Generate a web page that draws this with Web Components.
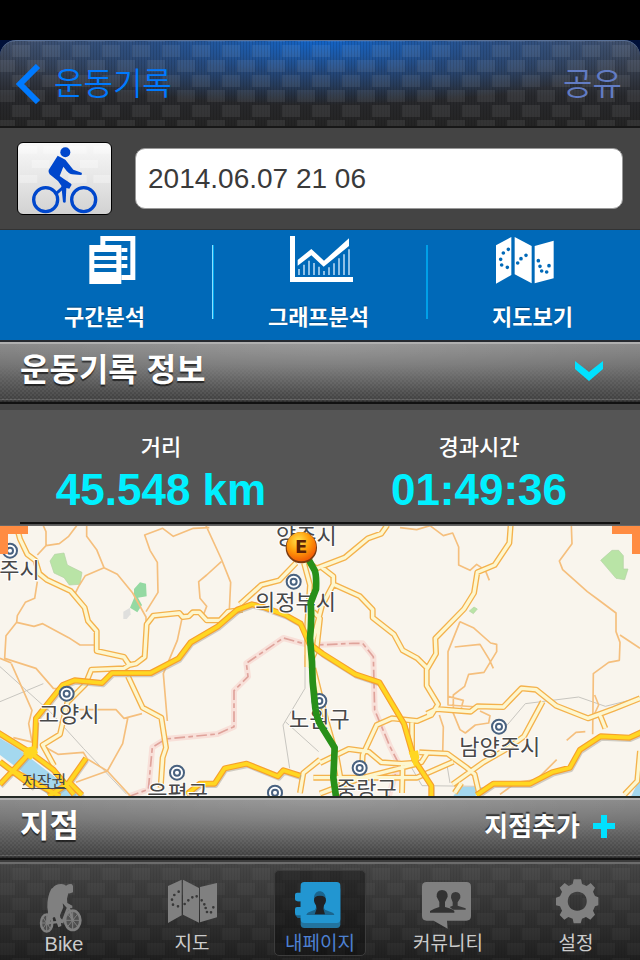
<!DOCTYPE html>
<html lang="ko">
<head>
<meta charset="utf-8">
<meta name="viewport" content="width=device-width, initial-scale=1">
<title>운동기록</title>
<style>
    body {
        margin: 0;
        background: #000;
        color: #fff;
        font-family: "Liberation Sans", "Noto Sans CJK KR", sans-serif;
    }
</style>
</head>
<body>
<ride-app></ride-app>

<script>
// Woven carbon texture shared by the top and bottom bars
const weave = `
    conic-gradient(from 270deg at 18px 12px, var(--block) 90deg, transparent 0) 12px 4px / 30px 30px,
    conic-gradient(from 270deg at 18px 12px, var(--block) 90deg, transparent 0) 27px 19px / 30px 30px,
    repeating-linear-gradient(90deg, var(--thread) 0 1px, transparent 1px 3px)
`;

const resetButton = `
    button {
        margin: 0;
        padding: 0;
        border: 0;
        background: none;
        color: inherit;
        font: inherit;
        cursor: pointer;
    }
    svg { display: block; }
`;

class BaseElement extends HTMLElement {
    constructor() {
        super();
        this.attachShadow({ mode: 'open' });
        const template = document.createElement('template');
        template.innerHTML = this.render();
        this.shadowRoot.appendChild(template.content.cloneNode(true));
    }
}

class NavBar extends BaseElement {
    render() {
        return `
            <style>
                ${resetButton}
                :host {
                    --block: rgba(255, 255, 255, 0.07);
                    --thread: rgba(0, 0, 0, 0.12);
                    display: block;
                    padding-top: 40px;
                    background: linear-gradient(#000 40px, #001038 40px 56px, #222 56px);
                }
                header {
                    display: flex;
                    align-items: center;
                    justify-content: space-between;
                    padding: 20px 18px 19px 16px;
                    border-top: 1px solid #5b7298;
                    border-bottom: 2px solid #171717;
                    border-radius: 16px 16px 0 0;
                    background: ${weave},
                        radial-gradient(ellipse 52% 75% at 50% 0, #1263c6, rgba(22, 80, 160, 0.55) 50%, transparent),
                        linear-gradient(#455168, #353d4c 35%, #28292d 65%, #242424);
                    font-size: 32px;
                    font-weight: 350;
                    line-height: 46px;
                }
                button { display: flex; align-items: center; gap: 13px; }
                .back { color: #007aff; }
                .share { color: #627cc4; }
            </style>
            <header>
                <button class="back">
                    <svg width="25" height="40" viewBox="0 0 25 40" aria-hidden="true">
                        <path d="M22 2 4 20l18 18" fill="none" stroke="currentColor" stroke-width="6"/>
                    </svg>
                    운동기록
                </button>
                <button class="share">공유</button>
            </header>
        `;
    }
}

class RecordTitle extends BaseElement {
    render() {
        return `
            <style>
                ${resetButton}
                :host {
                    display: flex;
                    align-items: center;
                    gap: 23px;
                    padding: 14px 17px;
                    background: #444;
                    border-bottom: 1px solid #333;
                }
                button {
                    flex: none;
                    border: 1px solid #000;
                    border-radius: 6px;
                    overflow: hidden;
                    background: linear-gradient(#f8f8f8, #e6e6e6 50%, #d2d2d2);
                }
                input {
                    flex: 1;
                    min-width: 0;
                    box-sizing: border-box;
                    height: 61px;
                    padding: 0 12px;
                    border: 1px solid #999;
                    border-radius: 10px;
                    background: #fff;
                    color: #3a3a3a;
                    font: inherit;
                    font-size: 28px;
                }
            </style>
            <button aria-label="자전거">
                <svg width="93" height="71" viewBox="54 339 279 213">
                    <path d="M58 347h54v24H58zM130 347h55v24h-55zM205 347h55v24h-55zM280 347h50v24h-50zM95 390h54v24H95zM240 390h54v24h-54zM58 435h54v24H58zM205 435h55v24h-55zM280 435h50v24h-50z" fill="#fff" opacity=".3"/>
                    <g fill="none" stroke="#0047cc">
                        <circle cx="137" cy="509" r="36" stroke-width="10"/>
                        <circle cx="251" cy="509" r="36" stroke-width="10"/>
                        <path d="m166 493 31-28" stroke-width="9"/>
                    </g>
                    <g fill="#0047cc">
                        <circle cx="196" cy="367" r="15"/>
                        <path d="M173 377q14 7 23 12l24 30 25 9q3 5-2 7l-27-2q-12-3-21-17l-5-6-11 28 14 10q18 11 22 16l-7 12-9-2-2 43q-5 3-8-1l-5-49-10-14-25-20q-5-5-3-13z"/>
                    </g>
                </svg>
            </button>
            <input type="text" aria-label="제목" value="2014.06.07 21 06">
        `;
    }
}

class ActionTab extends BaseElement {
    render() {
        return `
            <style>
                ${resetButton}
                :host { display: block; }
                button {
                    display: flex;
                    flex-direction: column;
                    align-items: center;
                    gap: 16px;
                    width: 100%;
                    padding: 5px 0;
                    font-size: 22px;
                    font-weight: 700;
                    line-height: 34px;
                    text-shadow: 0 -1px 1px rgba(0, 0, 0, 0.3);
                }
                .label { margin-right: 3px; }
            </style>
            <button><slot name="icon"></slot><span class="label"><slot></slot></span></button>
        `;
    }
}

class ActionBar extends BaseElement {
    render() {
        return `
            <style>
                :host {
                    display: grid;
                    grid-template-columns: 1fr 2px 1fr 2px 1fr;
                    background: #0069b8;
                    border-bottom: 2px solid #262a30;
                }
                svg { display: block; }
                i {
                    margin: 15px 0 21px;
                    background: linear-gradient(90deg, #8ae0ff 50%, #00a8ee 50%);
                }
                i + action-tab + i { background: #00a0e8; }
            </style>
            <action-tab>
                <svg slot="icon" width="78" height="50" viewBox="203 30 234 150" aria-hidden="true">
                    <path d="M303 60V33h105v132h-42v-15h27V48h-75v12z" fill="#fff"/>
                    <path d="M270 60h96v117h-96z" fill="#fff"/>
                    <path d="M285 81h66v12h-66zM285 105h66v12h-66zM285 129h66v12h-66z" fill="#0069b8"/>
                    <path d="M366 69h18v12h-18zM366 93h18v12h-18zM366 117h18v12h-18z" fill="#fff"/>
                </svg>
                구간분석
            </action-tab>
            <i></i>
            <action-tab>
                <svg slot="icon" width="78" height="50" viewBox="843 30 234 150" aria-hidden="true">
                    <path d="M870 33h15v123h174v15H870z" fill="#fff"/>
                    <path d="M893 105 934 72l38 35 75-67v23l-76 62-37-34-41 31z" fill="#fff"/>
                    <path d="M897 150v-18m15 18v-31m15 31v-43m15 43v-36m15 36v-25m15 25v-12m15 12v-23m15 23v-35m15 35v-50m15 50v-62m15 62V73" fill="none" stroke="#8fc0e6" stroke-width="6"/>
                </svg>
                그래프분석
            </action-tab>
            <i></i>
            <action-tab>
                <svg slot="icon" width="78" height="50" viewBox="523 30 234 150" aria-hidden="true">
                    <path d="M526 61 572 36v114l-46 26zM582 36l51 27v112l-51-27zM642 63l57-16v113l-57 15z" fill="#fff"/>
                    <path d="M563 73h0M548 84h0M540 103h0M543 120h0M560 127h0M591 114h0M601 101h0M616 91h0M653 107h0M658 124h0M663 138h0M678 141h0M685 122h0" stroke="#0069b8" stroke-width="11" stroke-linecap="round"/>
                </svg>
                지도보기
            </action-tab>
        `;
    }
}

class SectionHeader extends BaseElement {
    render() {
        return `
            <style>
                :host {
                    display: flex;
                    align-items: center;
                    justify-content: space-between;
                    position: relative;
                    padding: 4px 20px 9px;
                    border-top: 2px solid #b0b0b0;
                    border-bottom: 2px solid #111;
                    background: radial-gradient(ellipse 60% 100% at 50% 0, rgba(255, 255, 255, 0.14), transparent),
                        linear-gradient(#888, #6c6c6c 50%, #4c4c4c 94%, #777 95%, #333 98%);
                }
                /* fine checker that fades in towards the bottom edge */
                :host::before {
                    content: "";
                    position: absolute;
                    inset: 0;
                    background: repeating-conic-gradient(rgba(0, 0, 0, 0.14) 0 25%, transparent 0 50%) 0 0 / 4px 4px;
                    mask-image: linear-gradient(transparent 35%, #000);
                }
                h2 {
                    position: relative;
                    margin: 0;
                    font-size: 32px;
                    font-weight: 700;
                    line-height: 45px;
                    text-shadow: 0 2px 1px rgba(0, 0, 0, 0.6);
                }
                ::slotted(button) {
                    position: relative;
                    display: flex;
                    align-items: center;
                    gap: 13px;
                    padding: 0;
                    border: 0;
                    background: none;
                    color: inherit;
                    font: inherit;
                    font-size: 26px;
                    font-weight: 700;
                    line-height: 38px;
                    text-shadow: 0 -2px 1px rgba(0, 0, 0, 0.6);
                    cursor: pointer;
                }
            </style>
            <h2><slot></slot></h2>
            <slot name="action"></slot>
        `;
    }
}

class StatBox extends BaseElement {
    render() {
        return `
            <style>
                :host {
                    display: block;
                    text-align: center;
                    font-size: 22px;
                    font-weight: 500;
                    line-height: 34px;
                }
                p { margin: 0; }
                .value {
                    color: #00f0ff;
                    font-size: 44px;
                    font-weight: 700;
                    line-height: 50px;
                }
            </style>
            <p><slot></slot></p>
            <p class="value"><slot name="value"></slot></p>
        `;
    }
}

class RideStats extends BaseElement {
    render() {
        return `
            <style>
                :host {
                    display: block;
                    padding: 0 20px 1px;
                    border-top: 6px solid #444;
                    background: #555;
                }
                div {
                    display: grid;
                    grid-template-columns: 1fr 1fr;
                    gap: 36px;
                    padding: 21px 0 7px;
                    border-bottom: 2px solid #111;
                }
            </style>
            <div><slot></slot></div>
        `;
    }
}

// Map geometry, three units to a pixel
const minorRoads = [
    'M112 120 138 92V50l-8-18M138 92l40-6 28-22 24-32M260 32v32l30 40 22 54 40 20 46 56 40 72v62M312 158l-56 24-20 32-12 24M112 200l-8 50-28 12-24 40-2 20-32 40-4 68 94 30 52 60 38 2',
    'M50 322l52 12 26-8 78 42 34 22h44M438 290l36-58-2-90-22-36-16-46 54-20 32 24 60-24 48-2M618 32l46 100 28 70-4 84M664 140l-44 40-24 20 4 50 20 24-10 26',
    'M546 310l-14 66-42 100 12 142M34 446l62 140-10 40 10 54M232 584h116l24 26 54-14M384 606l-16 80-46 82-94 34M124 690l50 28 76-6 12 20 60 36 70 76',
    'M0 430l34 14M40 668l60 14M1200 38l50 6 40-12 40 30 28-8 18 42v54l34 16 20-18 26 18 12 30M1714 32l2 54-38 52 10 26 74 66 30 22 56 42v56l12 32-2 54-32 6-46 34-2 182',
    'M1860 360l60 40M1380 320l40 18 52 46 18 4v22l-38 62-46 6-12 36-34 26v44M1380 320l-36 90v160l90 6M1364 396l76-8 28 46 12 26M1344 544l46 12-6 22M1354 580l26 64 16 10 30-24 40-6 4-22-30-14',
    'M1318 600l12 36-2 80M1700 676l28-24 28-2M1784 540l12 30-14 30M1500 838l50-36 60-8 60-60'
];
const roads = [
    'M48 28 60 72 82 118 106 136 118 176 140 194 212 228 254 278 264 318 290 348v60l82 18 16 24 20-4 26-20 6-98 20-26 78-8 10 12 18-2 12-12h20l22 24h40l24-26 44-6',
    'M384 484l44 94 56 30 14 90-10 30-6 90M388 450l-16 10-98 4-18 44-54 54-22 96-52 32 34 62M720 268l64-58 54-14 50-52M912 144l18 66-8 116v130M924 456l26-56 10-90-20-20',
    'M916 136 950 160l84-32 70-58 40-14 18-26M966 158l34 26v24l-34 64-26 100M1000 208l80 36 38 40 0 24 64 50 26 48 44 24 28 28M1532 30l-4 54-44 66-52 22-10 62-30 48-86 88 2 46-28 48v48l34 56-20 32-42 18-76-8-46 20-42 90-4 82',
    'M1280 596l30-14 102 8 20-16 78 2 54-56 44 4 60 48 96 38 76-28 80-32M1800 600l16 40M1628 560l-56 104-52 38-70 40-92 66M960 744l86-42 60 8 38 32 60 4 60-4 18-28M1258 712l84 4 58 42 24 20 12 52',
    'M1360 740l-110 48H940M1208 744l-2 90M1236 620v94M940 460l40 160 30 106 20 110M960 836l120-46 180-46M1364 834l20-30M1920 708l-8 90-38 40M900 834l10-60 50-40'
];
const highways = [
    'M-10 650 90 712 160 764 222 838M90 712l-50 56 140 76M104 700l4-90 80-100 36-14 82 8 30-30h116l84-44 36-48 82-48 58-50 44-16 34 8 66 24 46 26 26 60 40 30 98 62 72 24 74 124 32 110 50 76v60M90 712 0 808M0 740l100 76M258 730l-52 74-60 40M206 800l40 40',
    'M560 838l40-32h44l30-46 66-14 94 38 16-18 50 16M1430 840l50-34h110l66-34 54-14 30-54 62-40 86 4 40-18h30'
];
const cityBorder = 'M385 845l60-22 12-126 40-25 155-15 50-22V527l42-42-5-40 111-76 80 22 130-6 28 0 32 40 4 160 46 110 26 50-30 100';

// name, label x, label baseline, pin x, pin y
const places = [
    ['파주시', -63, 190, 30, 107],
    ['양주시', 828, 88],
    ['의정부시', 765, 284, 881, 200],
    ['고양시', 116, 621, 200, 536],
    ['은평구', 442, 858, 531, 773],
    ['노원구', 867, 637, 958, 558],
    ['중랑구', 1008, 847, 1079, 759],
    ['남양주시', 1378, 719, 1497, 635],
    ['', 0, 0, 825, 833]
];

class RouteMap extends BaseElement {
    render() {
        const pin = ([, , , x, y]) => x === undefined ? '' : `
            <circle cx="${x}" cy="${y}" r="21" fill="#fff" stroke="#48617f" stroke-width="6"/>
            <circle cx="${x}" cy="${y}" r="9" fill="#fff" stroke="#48617f" stroke-width="6"/>`;
        const label = ([name, x, y]) => name && `<text x="${x}" y="${y}">${name}</text>`;
        return `
            <style>
                :host {
                    display: block;
                    position: relative;
                    overflow: hidden;
                    border-top: 1px solid #666;
                    border-bottom: 2px solid #252b27;
                    background: #f9f5ed;
                }
                svg { display: block; width: 100%; height: auto; }
                .lines { fill: none; stroke-linejoin: round; }
                text {
                    font-family: "Noto Sans CJK KR", sans-serif;
                    font-size: 66px;
                    fill: #484848;
                    stroke: #fff;
                    stroke-width: 6px;
                    paint-order: stroke;
                }
                .end {
                    font-family: "DejaVu Sans", sans-serif;
                    font-size: 54px;
                    font-weight: 700;
                    fill: #5c2106;
                    stroke: none;
                }
                a {
                    position: absolute;
                    left: 22px;
                    bottom: 4px;
                    color: #484848;
                    font-size: 16px;
                    line-height: 20px;
                }
            </style>
            <svg viewBox="0 33 1920 810" role="img" aria-label="지도">
                <defs>
                    <radialGradient id="ball" cx=".4" cy=".3" r=".7">
                        <stop offset="0" stop-color="#ffe34d"/>
                        <stop offset=".55" stop-color="#ff9d0a"/>
                        <stop offset="1" stop-color="#f25c05"/>
                    </radialGradient>
                </defs>
                <path d="M0 670 60 705 150 775 240 845H150L60 765 0 720zM1360 843l20-28 70 2-24 26zM1936 740l-16 0-10 70-16 33h60z" fill="#a4d8ef"/>
                <path d="M150 138 164 118l28-4 10 36 44 22-6 36-32 2-16-22-30-14zM1802 136l34-30 20 0 14 16v40l14 0-10 32-26-4zM1408 288l14-12 10 6-12 14z" fill="#b9e4a6" stroke="#b4d2a5" stroke-width="2"/>
                <path d="M402 222l18-20 18 4 2 38-26 4 12 22-14 22-22-14 12-28z" fill="#94d9a2"/>
                <path d="M370 290l20-12 2 20-12 14h-10z" fill="#dfdfdd"/>
                <g class="lines">
                    <path d="M0 455 150 590 250 700 380 838M0 560l130-54M915 420v100l-66 110 20 130M856 620l100 90M1520 632l56-66 160-20 80 28 104-26M1230 750l36 62 170 2M1340 744l10 60" stroke="#c8c6c0" stroke-width="3"/>
                    <path d="${cityBorder}" stroke="#f8e0d9" stroke-width="18"/>
                    <path d="${cityBorder}" stroke="#dfa39b" stroke-width="5" stroke-dasharray="32 10 14 10"/>
                    <path d="${minorRoads.join('')}" stroke="#f5bf7d" stroke-width="5"/>
                    <path d="${roads.join('')}" stroke="#f4b24c" stroke-width="18"/>
                    <path d="${roads.join('')}" stroke="#fdf7cf" stroke-width="10"/>
                    <path d="${highways.join('')}" stroke="#a8a39a" stroke-opacity=".5" stroke-width="14" transform="translate(3 6)"/>
                    <path d="${highways.join('')}" stroke="#f7a02c" stroke-width="18"/>
                    <path d="${highways.join('')}" stroke="#ffd722" stroke-width="11"/>
                </g>
                <path d="M72 700l34-8 8 22-22 20-22-16zM1226 712l28-6 4 22-14 30z" fill="#ffd722"/>
                ${places.map(pin).join('')}
                ${places.map(label).join('')}
                <path class="lines" d="M926 134 944 166Q950 180 948 222L932 264Q936 310 930 370L936 440 938 500 946 580Q950 610 964 634L1004 698 1000 788 1008 845" stroke="#289019" stroke-width="20"/>
                <circle cx="904" cy="98" r="47" fill="#7a3a10"/>
                <circle cx="904" cy="95" r="44" fill="url(#ball)"/>
                <text class="end" x="885" y="113">E</text>
                <path d="M0 33h84v24H24v60H0zM1836 33h84v84h-24V57h-60z" fill="#ff8c42"/>
            </svg>
            <a href="#legal">저작권</a>
        `;
    }
}

class TabItem extends BaseElement {
    render() {
        return `
            <style>
                ${resetButton}
                :host {
                    display: flex;
                    justify-content: center;
                    align-items: flex-start;
                    color: #ccc;
                }
                button {
                    display: flex;
                    flex-direction: column;
                    align-items: center;
                    width: 92px;
                    padding: 8px 0 0;
                    border: 1px solid transparent;
                    border-radius: 5px;
                    font-size: 19px;
                    line-height: 22px;
                }
                :host([latin]) button { font-size: 20px; }
                :host([selected]) { color: #4d80d2; }
                :host([selected]) button {
                    border-color: #3c3c3c;
                    background: rgba(0, 0, 0, 0.35);
                }
            </style>
            <button><slot name="icon"></slot><span><slot></slot></span></button>
        `;
    }
}

class TabBar extends BaseElement {
    render() {
        return `
            <style>
                :host {
                    --block: rgba(255, 255, 255, 0.03);
                    --thread: rgba(0, 0, 0, 0.06);
                    display: grid;
                    grid-template-columns: repeat(5, 1fr);
                    padding: 6px 0 2px;
                    border-top: 2px solid #6c6c6c;
                    background: ${weave}, linear-gradient(#464646, #1f1f1f);
                }
                svg { display: block; fill: #808080; }
                tab-item { min-width: 0; }
            </style>
            <tab-item latin>
                <svg slot="icon" width="64" height="54" viewBox="96 270 192 162" aria-hidden="true">
                    <g fill="rgba(128, 128, 128, 0.4)" stroke="#808080">
                        <ellipse cx="140" cy="402" rx="17" ry="26" stroke-width="7"/>
                        <ellipse cx="218" cy="394" rx="23" ry="29" stroke-width="8"/>
                    </g>
                    <g fill="none" stroke="#808080">
                        <path d="M140 376v52M123 402h34M128 384l24 36M152 384l-24 36M218 366v56M196 394h44M202 374l32 40M234 374l-32 40" stroke-width="3"/>
                        <path d="M142 400l22-24 24 22 16-42M188 398l-46 4M204 348l14 46" stroke-width="7"/>
                    </g>
                    <path d="M158 297q8-12 26-12 10 0 14 5 8-7 18-4l3 5v19q-8 4-14 3l-4 16 1 13 15 8v8l-17-2-12-13 2 12-10 24 4 32-9 4-10-30-12-1-6 24-10-4 7-35-2-14q-1-32 12-56"/>
                </svg>
                Bike
            </tab-item>
            <tab-item>
                <svg slot="icon" width="64" height="54" viewBox="480 270 192 162" aria-hidden="true">
                    <path d="M504 291l41-19v107l-41 23zM549 272l48 25v104l-48-24zM600 294l51-12v103l-51 15z"/>
                    <path d="M536 308h0M523 318h0M516 332h0M519 347h0M534 352h0M554 345h0M565 334h0M577 325h0M590 322h0M605 334h0M613 346h0M617 357h0M621 369h0M633 370h0M640 355h0" stroke="#383838" stroke-width="8" stroke-linecap="round"/>
                </svg>
                지도
            </tab-item>
            <tab-item selected>
                <svg slot="icon" width="64" height="54" viewBox="69 45 192 162" aria-hidden="true">
                    <path d="M92 92h16v21H98l-7-7zM92 138h16v24H98l-7-8z" fill="#1b658e"/>
                    <rect x="107" y="66" width="119" height="126" rx="11" fill="#22749f"/>
                    <path d="M118 54h97q11 0 11 11v100q0 12-11 12h-97q-11 0-11-12v-11H96q-6 0-6-7v-12q0-6 6-6h11v-18H96q-6 0-6-6V92q0-6 6-6h11V65q0-11 11-11" fill="#2296d1"/>
                    <path d="M147 104c-2-30 36-30 35 0l-7 25 5 8 23 9q5 2 5 7h-84q2-6 7-8l19-8 4-8z" fill="#1b658e"/>
                    <path d="M147 110q-1-15 18-15t18 15q-1 8-6 14l-2 10 5 17h-31l6-17-2-10q-5-6-6-14" fill="#202225"/>
                </svg>
                내페이지
            </tab-item>
            <tab-item>
                <svg slot="icon" width="64" height="54" viewBox="288 270 192 162" aria-hidden="true">
                    <path d="M320 279h119q14 0 14 14v88q0 14-14 14h-58l2 24-42-24h-21q-14 0-14-14v-88q0-14 14-14"/>
                    <path d="M393 326q-1-16 14-17 16 1 14 18l-8 13v10l24 8v4h-38l-10-8 9-4v-10z" fill="#383838"/>
                    <path d="M350 323q-1-19 16-20 18 1 17 20l-8 16v15q23 6 28 12v5h-73v-5q12-7 28-12v-15z" fill="#323232"/>
                </svg>
                커뮤니티
            </tab-item>
            <tab-item>
                <svg slot="icon" width="64" height="54" viewBox="672 270 192 162" aria-hidden="true">
                    <path fill-rule="evenodd" d="M761 271h22l3 14 14 6 12-9 13 14-6 12 6 13 10 4v24l-10 3-6 13 6 12-14 15-13-8-12 5-4 14h-21l-3-14-13-5-12 8-14-14 7-13-6-13-12-3v-23l12-4 6-14-7-12 15-14 12 9 12-6zM772 308c-38 1-38 56 0 57 38-1 38-56 0-57"/>
                </svg>
                설정
            </tab-item>
        `;
    }
}

class RideApp extends BaseElement {
    render() {
        return `
            <style>
                :host {
                    display: flex;
                    flex-direction: column;
                    min-height: 100vh;
                    background: #3c3c3c;
                }
                tab-bar {
                    flex: 1;
                    margin-top: 2px;
                }
                svg { display: block; margin-right: 5px; }
                .toggle svg { margin-right: 17px; }
            </style>
            <nav-bar></nav-bar>
            <record-title></record-title>
            <action-bar></action-bar>
            <section-header>
                운동기록 정보
                <button slot="action" class="toggle" aria-label="접기">
                    <svg width="28" height="20" viewBox="0 0 28 20"><path d="M0 0l14 11L28 0v8L14 20 0 8z" fill="#00e1ff"/></svg>
                </button>
            </section-header>
            <ride-stats>
                <stat-box>거리<span slot="value">45.548 km</span></stat-box>
                <stat-box>경과시간<span slot="value">01:49:36</span></stat-box>
            </ride-stats>
            <route-map></route-map>
            <section-header>
                지점
                <button slot="action">
                    지점추가
                    <svg width="22" height="23" viewBox="0 0 22 23" aria-hidden="true"><path d="M8 0h6v8h8v6h-8v9H8v-9H0V8h8z" fill="#00e1ff"/></svg>
                </button>
            </section-header>
            <tab-bar></tab-bar>
        `;
    }
}

customElements.define('nav-bar', NavBar);
customElements.define('record-title', RecordTitle);
customElements.define('action-tab', ActionTab);
customElements.define('action-bar', ActionBar);
customElements.define('section-header', SectionHeader);
customElements.define('stat-box', StatBox);
customElements.define('ride-stats', RideStats);
customElements.define('route-map', RouteMap);
customElements.define('tab-item', TabItem);
customElements.define('tab-bar', TabBar);
customElements.define('ride-app', RideApp);
</script>
</body>
</html>
